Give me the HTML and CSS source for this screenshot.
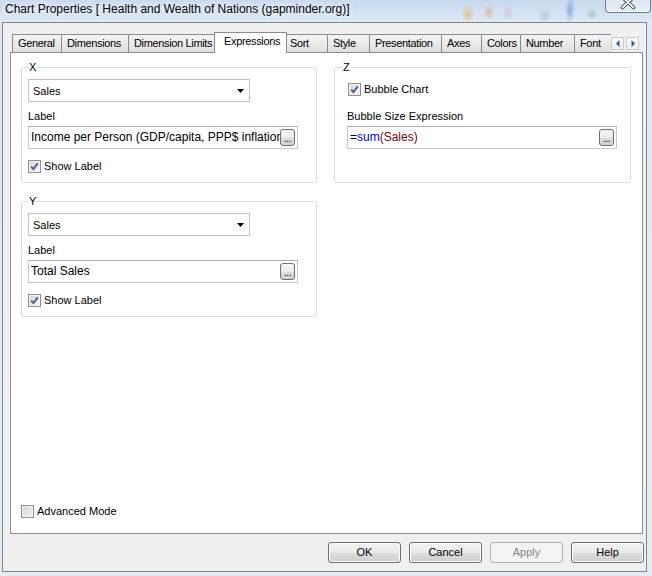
FILE: index.html
```html
<!DOCTYPE html>
<html>
<head>
<meta charset="utf-8">
<title>Chart Properties</title>
<link rel="stylesheet" href="styles.css">
</head>
<body>
<div class="window">
  <div class="titlebar">
    <div class="title">Chart Properties [ Health and Wealth of Nations (gapminder.org)]</div>
    <div class="close-btn">
      <svg width="18" height="11" viewBox="0 0 18 11"><path d="M3.5 -3 L14.5 7.5 M14.5 -3 L3.5 7.5" stroke="#3a4656" stroke-width="3.8" stroke-linecap="round" fill="none"/><path d="M3.5 -3 L14.5 7.5 M14.5 -3 L3.5 7.5" stroke="#f4f6f9" stroke-width="2" stroke-linecap="round" fill="none"/></svg>
    </div>
  </div>
  <div class="client">
    <div class="tabrow">
      <div class="tabs">
        <div class="tab">General</div>
        <div class="tab">Dimensions</div>
        <div class="tab">Dimension Limits</div>
        <div class="tab active">Expressions</div>
        <div class="tab">Sort</div>
        <div class="tab">Style</div>
        <div class="tab">Presentation</div>
        <div class="tab">Axes</div>
        <div class="tab">Colors</div>
        <div class="tab">Number</div>
        <div class="tab">Font</div>
      </div>
      <div class="tab-scroll">
        <div class="scroll-btn"><svg width="4" height="7" viewBox="0 0 4 7"><path d="M3.5 0 L0 3.5 L3.5 7 Z" fill="#2f56a6"/></svg></div>
        <div class="scroll-btn"><svg width="4" height="7" viewBox="0 0 4 7"><path d="M0.5 0 L4 3.5 L0.5 7 Z" fill="#2f56a6"/></svg></div>
      </div>
    </div>
    <div class="panel">
      <div class="groups">
        <fieldset class="group">
          <legend>X</legend>
          <div class="combo"><span class="combo-text">Sales</span><svg class="combo-arrow" width="7" height="4" viewBox="0 0 7 4"><path d="M0 0 L7 0 L3.5 4 Z" fill="#000"/></svg></div>
          <div class="field-label">Label</div>
          <div class="textbox"><span class="tb-text">Income per Person (GDP/capita, PPP$ inflation-adjusted)</span><div class="ellipsis">...</div></div>
          <div class="check show-label"><span class="box"><svg width="9" height="9" viewBox="0 0 9 9"><path d="M1.2 4.6 L3.4 7 L7.8 1.3" stroke="#4c5f8c" stroke-width="1.9" fill="none"/></svg></span>Show Label</div>
        </fieldset>
        <fieldset class="group group-z">
          <legend>Z</legend>
          <div class="check bubble"><span class="box"><svg width="9" height="9" viewBox="0 0 9 9"><path d="M1.2 4.6 L3.4 7 L7.8 1.3" stroke="#4c5f8c" stroke-width="1.9" fill="none"/></svg></span>Bubble Chart</div>
          <div class="field-label z-label">Bubble Size Expression</div>
          <div class="textbox"><span class="tb-text">=<span class="kw">sum</span><span class="fld">(Sales)</span></span><div class="ellipsis">...</div></div>
        </fieldset>
        <fieldset class="group">
          <legend>Y</legend>
          <div class="combo"><span class="combo-text">Sales</span><svg class="combo-arrow" width="7" height="4" viewBox="0 0 7 4"><path d="M0 0 L7 0 L3.5 4 Z" fill="#000"/></svg></div>
          <div class="field-label">Label</div>
          <div class="textbox"><span class="tb-text">Total Sales</span><div class="ellipsis">...</div></div>
          <div class="check show-label"><span class="box"><svg width="9" height="9" viewBox="0 0 9 9"><path d="M1.2 4.6 L3.4 7 L7.8 1.3" stroke="#4c5f8c" stroke-width="1.9" fill="none"/></svg></span>Show Label</div>
        </fieldset>
      </div>
      <div class="check advanced"><span class="box"></span>Advanced Mode</div>
    </div>
    <div class="buttons">
      <div class="btn">OK</div>
      <div class="btn">Cancel</div>
      <div class="btn disabled">Apply</div>
      <div class="btn">Help</div>
    </div>
  </div>
</div>
</body>
</html>
```

FILE: styles.css
```css
html, body {
  margin: 0;
  padding: 0;
}
body {
  width: 652px;
  height: 576px;
  overflow: hidden;
  font-family: "Liberation Sans", Arial, sans-serif;
  font-size: 11px;
  color: #000;
}
.window {
  width: 652px;
  height: 576px;
  background:
    radial-gradient(ellipse 7px 9px at 468px 14px, rgba(232, 168, 60, 0.55), rgba(232, 168, 60, 0) 100%),
    radial-gradient(ellipse 6px 8px at 489px 12px, rgba(226, 150, 70, 0.45), rgba(226, 150, 70, 0) 100%),
    radial-gradient(ellipse 6px 8px at 508px 13px, rgba(214, 150, 170, 0.35), rgba(214, 150, 170, 0) 100%),
    radial-gradient(ellipse 8px 8px at 545px 16px, rgba(150, 180, 220, 0.45), rgba(150, 180, 220, 0) 100%),
    radial-gradient(ellipse 5px 14px at 570px 10px, rgba(90, 130, 200, 0.55), rgba(90, 130, 200, 0) 100%),
    radial-gradient(ellipse 6px 6px at 592px 14px, rgba(120, 170, 110, 0.4), rgba(120, 170, 110, 0) 100%),
    linear-gradient(to bottom, #c8daf0 0px, #d4e2f3 14px, #e0e9f4 22px, #e6ecf3 100%);
}
.titlebar {
  height: 22px;
  display: flex;
  align-items: flex-start;
}
.title {
  padding: 3px 0 0 5px;
  font-size: 12px;
  line-height: 13px;
  color: #000;
  text-shadow: 0 0 5px #fff, 0 0 8px #fff;
  white-space: nowrap;
}
.close-btn {
  margin-left: auto;
  margin-right: 1px;
  width: 46px;
  height: 13px;
  box-sizing: border-box;
  border: 1px solid #6f7f92;
  border-top: none;
  border-radius: 0 0 4px 4px;
  background: linear-gradient(to bottom, #dfe7f1, #e9eef5);
  box-shadow: inset 0 -1px 0 #fafcfe;
  display: flex;
  justify-content: center;
  align-items: flex-start;
}
.client {
  margin-left: 2px;
  width: 645px;
  height: 550px;
  box-sizing: border-box;
  border: 1px solid #858585;
  background: #f0f0f0;
  display: flex;
  flex-direction: column;
}
.tabrow {
  display: flex;
  margin: 9px 0 0 9px;
  height: 21px;
}
.tabs {
  display: grid;
  grid-template-columns: 49px 67px 88px 68px 43px 42px 72px 40px 39px 54px 45px;
  width: 599px;
  height: 21px;
  overflow: hidden;
  align-items: end;
}
.tab {
  height: 18px;
  margin-right: -1px;
  margin-bottom: 1px;
  box-sizing: border-box;
  border: 1px solid #898c95;
  border-bottom: none;
  background: linear-gradient(to bottom, #f5f5f5, #e8e8e8 60%, #dedede);
  padding-left: 5px;
  text-align: left;
  line-height: 17px;
  letter-spacing: -0.35px;
  white-space: nowrap;
  overflow: hidden;
}
.tab.active {
  position: relative;
  z-index: 1;
  height: 21px;
  margin-left: -2px;
  margin-right: -3px;
  margin-bottom: 0;
  padding-left: 9px;
  background: #fff;
  line-height: 17px;
}
.tab-scroll {
  display: flex;
  gap: 2px;
  margin-top: 5px;
}
.scroll-btn {
  width: 13px;
  height: 13px;
  box-sizing: border-box;
  border: 1px solid #c9cdd3;
  background: linear-gradient(to bottom, #fdfdfd, #eef0f3);
  display: flex;
  align-items: center;
  justify-content: center;
}
.panel {
  margin: -1px 0 0 7px;
  width: 633px;
  height: 482px;
  box-sizing: border-box;
  border: 1px solid #898c95;
  background: #fff;
  padding: 8px 0 15px 10px;
  display: flex;
  flex-direction: column;
}
.groups {
  display: grid;
  grid-template-columns: 296px 297px;
  column-gap: 17px;
  row-gap: 12px;
  align-items: stretch;
}
.group {
  margin: 0;
  min-width: 0;
  padding: 5px 6px 9px 6px;
  border: 1px solid #d5dfe5;
  border-radius: 3px;
}
.group legend {
  padding: 0 1px;
  margin-left: 0;
  line-height: 13px;
  font-size: 11px;
}
.group-z {
  padding-left: 12px;
}
.group-z legend {
  margin-left: -5px;
}
.combo {
  width: 222px;
  height: 23px;
  box-sizing: border-box;
  border: 1px solid #c3c3c3;
  background: #fff;
  display: flex;
  align-items: center;
  padding: 0 5px 0 4px;
}
.combo-text {
  flex: 1;
}
.field-label {
  margin-top: 8px;
  line-height: 13px;
}
.z-label {
  margin-top: 14px;
}
.textbox {
  margin-top: 3px;
  width: 270px;
  height: 23px;
  box-sizing: border-box;
  border: 1px solid #c6c9ce;
  border-top-color: #abadb3;
  background: #fff;
  display: flex;
  align-items: center;
  padding: 0 2px 0 2px;
  font-size: 12px;
}
.tb-text {
  flex: 1;
  min-width: 0;
  overflow: hidden;
  white-space: nowrap;
  line-height: 15px;
}
.kw {
  color: #0000ff;
}
.fld {
  color: #800000;
}
.ellipsis {
  flex: none;
  width: 15px;
  height: 17px;
  box-sizing: border-box;
  border: 1px solid #707070;
  border-radius: 3px;
  background: linear-gradient(to bottom, #f6f6f6, #ececec 50%, #dcdcdc 51%, #d2d2d2);
  font-size: 10px;
  line-height: 17px;
  text-align: center;
  letter-spacing: -0.5px;
  color: #000;
}
.check {
  display: flex;
  align-items: center;
  gap: 3px;
  height: 13px;
  line-height: 13px;
}
.show-label {
  margin-top: 11px;
}
.bubble {
  margin-top: 4px;
  margin-left: 1px;
}
.box {
  width: 13px;
  height: 13px;
  box-sizing: border-box;
  border: 1px solid #8e8f8f;
  background: linear-gradient(135deg, #d2d4d8, #f6f6f6);
  box-shadow: inset 0 0 0 1px #f4f4f4;
  display: flex;
  align-items: center;
  justify-content: center;
}
.advanced {
  margin-top: auto;
}
.buttons {
  display: flex;
  justify-content: flex-end;
  gap: 8px;
  margin-top: 8px;
  padding-right: 2px;
}
.btn {
  width: 73px;
  height: 21px;
  box-sizing: border-box;
  border: 1px solid #707070;
  border-radius: 3px;
  background: linear-gradient(to bottom, #f2f2f2 0%, #ebebeb 50%, #dddddd 51%, #cfcfcf 100%);
  box-shadow: inset 0 0 0 1px #fcfcfc;
  text-align: center;
  line-height: 19px;
}
.btn.disabled {
  border-color: #adb2b5;
  background: #f4f4f4;
  box-shadow: none;
  color: #838383;
}
```
